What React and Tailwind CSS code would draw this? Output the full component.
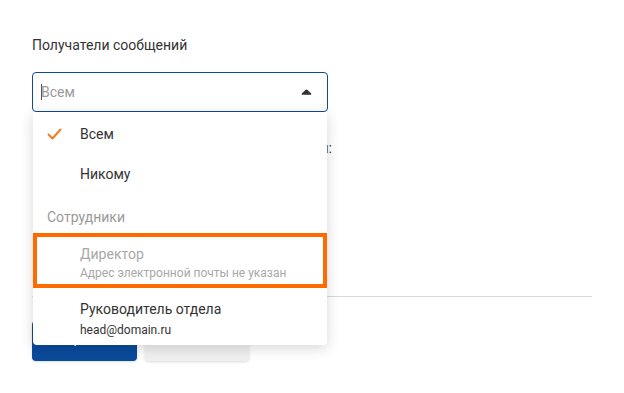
import React from 'react';

const font = { fontFamily: 'Roboto, "Noto Sans", sans-serif' };

const CheckIcon = () => (
  <svg width="15" height="12" viewBox="0 0 15 12" fill="none">
    <path d="M1.5 6.5 L5.5 10.5 L13.5 1.5" stroke="#f47b20" strokeWidth="2" strokeLinecap="round" strokeLinejoin="round" />
  </svg>
);

const CaretUp = () => (
  <svg width="11" height="6" viewBox="0 0 11 6">
    <path d="M5.5 0.5 C6 0.5 6.3 0.8 6.6 1.1 L10.2 4.6 C10.7 5.1 10.4 5.8 9.7 5.8 H1.3 C0.6 5.8 0.3 5.1 0.8 4.6 L4.4 1.1 C4.7 0.8 5 0.5 5.5 0.5 Z" fill="#333333" />
  </svg>
);

export default function App() {
  return (
    <div className="min-h-screen bg-white text-[#333] px-8 pt-[35px]" style={font}>
      {/* Label */}
      <div className="text-sm leading-5">Получатели сообщений</div>

      {/* Select */}
      <div className="relative w-[296px] mt-[17px] z-10">
        <div className="h-10 flex items-center justify-between pl-2 pr-[15px] border border-[#0d4a97] rounded bg-white">
          <div className="flex items-center text-sm text-[#9a9a9a]">
            <span className="w-px h-4 bg-[#555] mr-[-1px]" />
            <span>Всем</span>
          </div>
          <CaretUp />
        </div>

        {/* Dropdown */}
        <div className="absolute top-full left-px right-px pt-[2px] bg-white rounded-b shadow-[0_3px_14px_rgba(0,0,0,0.16)] text-sm">
          <div className="h-10 flex items-center pl-[14px]">
            <span className="w-[33px] flex"><CheckIcon /></span>
            <span>Всем</span>
          </div>
          <div className="h-10 flex items-center pl-[47px]">Никому</div>
          <div className="h-[39px] flex items-end pb-[6px] pl-[14px] text-[#9a9a9a]">Сотрудники</div>
          <div className="h-[55px] border-4 border-[#ff6a00] pl-[43px] pt-[7px] text-[#a8a8a8]">
            <div className="leading-5">Директор</div>
            <div className="text-xs leading-4 mt-px">Адрес электронной почты не указан</div>
          </div>
          <div className="h-[57px] pl-[47px] pt-[11px]">
            <div className="leading-5">Руководитель отдела</div>
            <div className="text-xs leading-4 mt-[3px]">head@domain.ru</div>
          </div>
        </div>
      </div>

      {/* Content behind dropdown */}
      <div className="w-[300px] text-right text-sm leading-5 mt-[26px]">Текст уведомления для получателей:</div>
      <div className="h-[138px]" />
      <div className="w-[560px] border-t border-[#d9d9d9]" />
      <div className="flex gap-2 mt-6">
        <button className="w-[105px] h-10 pb-[6px] rounded bg-[#0a4a9b] text-white text-sm shadow-sm">Сохранить</button>
        <button className="w-[104px] h-10 pb-[6px] rounded bg-[#f0f0f0] text-[#333] text-sm shadow-[0_1px_3px_rgba(0,0,0,0.15)]">Отмена</button>
      </div>
    </div>
  );
}
